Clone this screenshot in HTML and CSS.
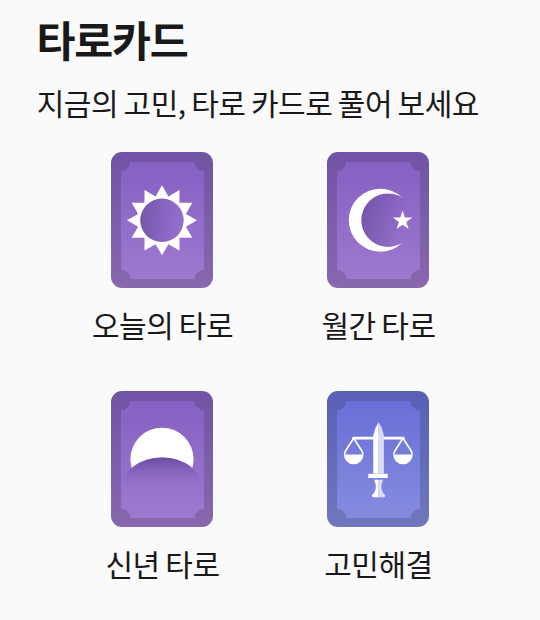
FILE: index.html
```html
<!DOCTYPE html>
<html lang="ko">
<head>
    <meta charset="UTF-8">
    <meta name="viewport" content="width=device-width, initial-scale=1.0">
    <title>타로카드</title>
    <link rel="stylesheet" href="styles.css">
</head>
<body>
    <!-- shared shapes -->
    <svg class="defs" width="0" height="0">
        <defs>
            <linearGradient id="purple" x1="0" y1="0" x2="0" y2="1">
                <stop offset="0" stop-color="#8660c3"/>
                <stop offset="1" stop-color="#9d79cf"/>
            </linearGradient>
            <linearGradient id="purple-edge" x1="0" y1="0" x2="0" y2="1">
                <stop offset="0" stop-color="#7153a5"/>
                <stop offset="1" stop-color="#8768ae"/>
            </linearGradient>
            <linearGradient id="blue" x1="0" y1="0" x2="0" y2="1">
                <stop offset="0" stop-color="#696fd6"/>
                <stop offset="1" stop-color="#858cdf"/>
            </linearGradient>
            <linearGradient id="blue-edge" x1="0" y1="0" x2="0" y2="1">
                <stop offset="0" stop-color="#595fb5"/>
                <stop offset="1" stop-color="#7077bd"/>
            </linearGradient>
            <linearGradient id="shade-x" x1="0" y1="0" x2="1" y2="0.1">
                <stop offset="0" stop-color="#5f4394" stop-opacity="0.55"/>
                <stop offset="0.85" stop-color="#5f4394" stop-opacity="0"/>
            </linearGradient>
            <linearGradient id="shade-y" x1="0" y1="66" x2="0" y2="92" gradientUnits="userSpaceOnUse">
                <stop offset="0" stop-color="#5f4394" stop-opacity="0.75"/>
                <stop offset="0.5" stop-color="#5f4394" stop-opacity="0.3"/>
                <stop offset="1" stop-color="#5f4394" stop-opacity="0"/>
            </linearGradient>
            <path id="panel" d="M19.3 10H83.7A9.3 9.3 0 0 0 93 19.3V117.7A9.3 9.3 0 0 0 83.7 127H19.3A9.3 9.3 0 0 0 10 117.7V19.3A9.3 9.3 0 0 0 19.3 10Z"/>
            <clipPath id="hill-clip">
                <path d="M0 0H102V97H91A40 30.6 0 0 0 11 97H0Z"/>
            </clipPath>
        </defs>
    </svg>

    <main class="tarot">
        <h1 class="tarot-title">타로카드</h1>
        <p class="tarot-desc">지금의 고민, 타로 카드로 풀어 보세요</p>

        <ul class="card-list">
            <li class="card-item">
                <svg class="card" viewBox="0 0 102 136">
                    <rect width="102" height="136" rx="11" fill="url(#purple-edge)"/>
                    <use href="#panel" fill="url(#purple)"/>
                    <path fill="#fff" d="M51 33.3L57.4 44.4L68.5 38L68.5 50.8L81.3 50.8L74.9 61.9L86 68.3L74.9 74.7L81.3 85.8L68.5 85.8L68.5 98.6L57.4 92.2L51 103.3L44.6 92.2L33.5 98.6L33.5 85.8L20.7 85.8L27.1 74.7L16 68.3L27.1 61.9L20.7 50.8L33.5 50.8L33.5 38L44.6 44.4Z"/>
                    <circle cx="51" cy="68.3" r="21.7" fill="#916cc9"/>
                    <circle cx="51" cy="68.3" r="21.7" fill="url(#shade-x)"/>
                </svg>
                <span class="card-name">오늘의 타로</span>
            </li>
            <li class="card-item">
                <svg class="card" viewBox="0 0 102 136">
                    <rect width="102" height="136" rx="11" fill="url(#purple-edge)"/>
                    <use href="#panel" fill="url(#purple)"/>
                    <circle cx="60.8" cy="68.2" r="26.6" fill="url(#shade-x)"/>
                    <path fill="#fff" d="M75.2 45.6A31.5 31.5 0 1 0 75.2 90.8A26.7 26.7 0 1 1 75.2 45.6Z"/>
                    <path fill="#fff" d="M75.6 58.6L77.9 65.6H85.3L79.3 70L81.6 77L75.6 72.7L69.6 77L71.9 70L65.9 65.6H73.3Z"/>
                </svg>
                <span class="card-name">월간 타로</span>
            </li>
            <li class="card-item">
                <svg class="card" viewBox="0 0 102 136">
                    <rect width="102" height="136" rx="11" fill="url(#purple-edge)"/>
                    <use href="#panel" fill="url(#purple)"/>
                    <circle cx="51" cy="68.3" r="31.6" fill="#fff" clip-path="url(#hill-clip)"/>
                    <ellipse cx="51" cy="97" rx="40" ry="30.6" fill="url(#shade-y)"/>
                </svg>
                <span class="card-name">신년 타로</span>
            </li>
            <li class="card-item">
                <svg class="card" viewBox="0 0 102 136">
                    <rect width="102" height="136" rx="11" fill="url(#blue-edge)"/>
                    <use href="#panel" fill="url(#blue)"/>
                    <path d="M26.5 47.2H76.3" stroke="#fff" stroke-width="2.8" stroke-linecap="round"/>
                    <g fill="none" stroke="#fff" stroke-width="1.6">
                        <path d="M26.7 47.2L18.8 59.5Q17.6 61.5 17.6 63.5M26.7 47.2L34.6 59.5Q35.8 61.5 35.8 63.5"/>
                        <path d="M76 47.2L68.1 59.5Q66.9 61.5 66.9 63.5M76 47.2L83.9 59.5Q85.1 61.5 85.1 63.5"/>
                    </g>
                    <path fill="#fff" d="M16.9 63.5H36.5A9.8 9.8 0 0 1 16.9 63.5ZM66.2 63.5H85.8A9.8 9.8 0 0 1 66.2 63.5Z"/>
                    <!-- sword -->
                    <path fill="#fff" d="M51.6 31V82.8H46.3V44.5Q47.5 37 51.6 31Z"/>
                    <path fill="#dadcf5" d="M51.6 31Q55.7 37 56.9 44.5V82.8H51.6Z"/>
                    <path fill="#fff" d="M41.3 82.8H60.7V87H41.3Z"/>
                    <path fill="#fff" d="M47 88.7H51.6V106.2H46Q43.5 104 46.8 102.5Q50.8 96.5 47 88.7Z"/>
                    <path fill="#dadcf5" d="M51.6 88.7H56.2Q52.4 96.5 56.4 102.5Q59.7 104 57.2 106.2H51.6Z"/>
                </svg>
                <span class="card-name">고민해결</span>
            </li>
        </ul>
    </main>
</body>
</html>
```
FILE: styles.css
```css
* {
    box-sizing: border-box;
}

body {
    margin: 0;
    background: #fafafa;
    color: #191919;
    font-family: "Noto Sans CJK KR", sans-serif;
    letter-spacing: -0.03em;
    word-spacing: -2.4px;
}

.defs {
    display: block;
}

.tarot {
    padding: 11px 36px 0;
}

.tarot-title {
    margin: 0;
    padding-left: 0.5px;
    font-size: 42.4px;
    font-weight: 700;
    line-height: 56px;
    letter-spacing: -0.03em;
}

.tarot-desc {
    margin: 13px 0 0;
    padding-left: 0.7px;
    font-size: 30px;
    line-height: 44px;
    white-space: nowrap;
}

.card-list {
    display: grid;
    grid-template-columns: 216px 216px;
    justify-content: center;
    row-gap: 45px;
    margin: 28px 0 0;
    padding: 0;
    list-style: none;
}

.card-item {
    display: flex;
    flex-direction: column;
    align-items: center;
}

.card {
    display: block;
    width: 102px;
    height: 136px;
}

.card-name {
    margin-top: 14px;
    padding-left: 1px;
    font-size: 30px;
    line-height: 44px;
}
```
